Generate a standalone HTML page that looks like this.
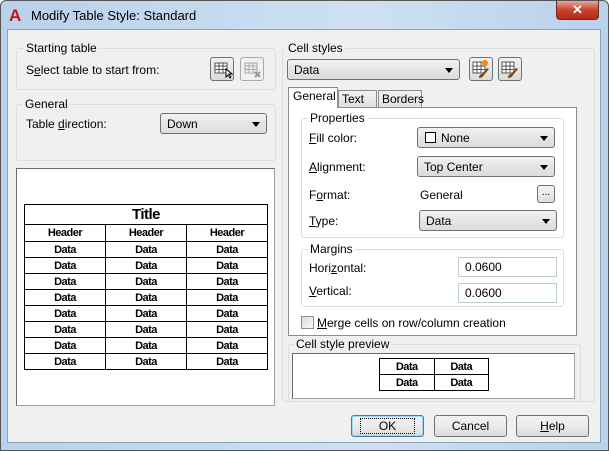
<!DOCTYPE html><html><head><style>
*{box-sizing:border-box}
body{margin:0;width:609px;height:451px;overflow:hidden;font-family:"Liberation Sans",sans-serif;font-size:12px;color:#000;background:#fff}
.win{position:absolute;left:0;top:0;width:609px;height:451px;background:linear-gradient(90deg,#b9d1ea,#cfe0f2 60%,#b9d1ea);border:1px solid #555;border-radius:6px 6px 0 0}
.client{position:absolute;left:7px;top:29px;width:594px;height:414px;background:#f0f0f0;border:1px solid #8da3bd}
.a{position:absolute}
.grp{position:absolute;border:1px solid #d5dfe5;border-radius:3px}
.lbl{position:absolute;background:#f0f0f0;padding:0 2px;line-height:14px}
.combo{position:absolute;height:21px;border:1px solid #707070;border-radius:3px;background:linear-gradient(#f2f2f2,#e5e5e5 50%,#dcdcdc);padding:3px 6px;line-height:14px}
.combo:after{content:"";position:absolute;right:6px;top:8px;border:4px solid transparent;border-top:5px solid #000;border-bottom:0}
.ib{position:absolute;width:24px;height:24px;border:1px solid #707070;border-radius:3px;background:linear-gradient(#f2f2f2,#dcdcdc)}
.txt{position:absolute;height:20px;border:1px solid #bcc;background:#fff;padding:2px 6px;line-height:14px}
.btn{position:absolute;height:22px;border:1px solid #707070;border-radius:3px;background:linear-gradient(#f2f2f2,#ebebeb 50%,#dcdcdc);text-align:center;line-height:20px}
table{border-collapse:collapse;font-weight:bold;font-size:11px;letter-spacing:-.5px}
td{border:1px solid #000;text-align:center;padding:0;height:16px;line-height:14px}
</style></head><body>
<div class="win">
<div class="a" style="left:8px;top:8px;width:16px;height:14px;color:#c3141a;font-weight:bold;font-size:17px;line-height:14px">A</div>
<div class="a" style="left:30px;top:7px;font-size:13px">Modify Table Style: Standard</div>
<div class="a" style="left:555px;top:0;width:43px;height:19px;background:linear-gradient(#e8a89a,#c7432d 50%,#b42a16);border:1px solid #6b2b22;border-top:0;border-radius:0 0 4px 4px;color:#fff;text-align:center;font-weight:bold;font-size:13px;line-height:18px">✕</div>
</div>
<div class="client"></div>
<div class="grp" style="left:16px;top:48px;width:260px;height:42px"></div>
<div class="lbl" style="left:24px;top:41px">Starting table</div>
<div class="a" style="left:26px;top:63px">S<u>e</u>lect table to start from:</div>
<div class="ib" style="left:210px;top:57px"><svg width="22" height="22"><rect x="4" y="5" width="12" height="10" fill="#fff" stroke="#555"/><path d="M4 8h12M4 11.5h12M8 5v10M12 5v10" stroke="#555"/><path d="M15 11l0 8 2-2 2 3 1-1-2-3 3 0z" fill="#fff" stroke="#000"/></svg></div>
<div class="ib" style="left:240px;top:57px;border-color:#aaa;background:#f0f0f0"><svg width="22" height="22"><rect x="4" y="5" width="12" height="10" fill="#eee" stroke="#aaa"/><path d="M4 8h12M4 11.5h12M8 5v10M12 5v10" stroke="#aaa"/><path d="M14 14l5 5M19 14l-5 5" stroke="#999" stroke-width="2"/></svg></div>
<div class="grp" style="left:16px;top:104px;width:260px;height:57px"></div>
<div class="lbl" style="left:23px;top:97px">General</div>
<div class="a" style="left:26px;top:117px">Table <u>d</u>irection:</div>
<div class="combo" style="left:160px;top:113px;width:107px">Down</div>
<div class="a" style="left:16px;top:168px;width:259px;height:238px;background:#fff;border:1px solid #a0a0a0;border-left-color:#696969;border-top-color:#696969"></div>
<table class="a" style="left:24px;top:204px;width:244px">
<tr><td colspan="3" style="font-size:15px;height:20px">Title</td></tr>
<tr><td style="height:17px">Header</td><td>Header</td><td>Header</td></tr>
<tr><td>Data</td><td>Data</td><td>Data</td></tr><tr><td>Data</td><td>Data</td><td>Data</td></tr><tr><td>Data</td><td>Data</td><td>Data</td></tr><tr><td>Data</td><td>Data</td><td>Data</td></tr><tr><td>Data</td><td>Data</td><td>Data</td></tr><tr><td>Data</td><td>Data</td><td>Data</td></tr><tr><td>Data</td><td>Data</td><td>Data</td></tr><tr><td>Data</td><td>Data</td><td>Data</td></tr>
</table>
<div class="grp" style="left:282px;top:48px;width:313px;height:354px"></div>
<div class="lbl" style="left:286px;top:41px">Cell styles</div>
<div class="combo" style="left:287px;top:59px;width:173px">Data</div>
<div class="ib" style="left:469px;top:57px"><svg width="22" height="22"><rect x="3" y="4" width="12" height="11" fill="#fff" stroke="#555"/><path d="M3 8h12M3 11.5h12M7 4v11M11 4v11" stroke="#555"/><circle cx="15" cy="5" r="3" fill="#f80"/><path d="M9 20c2 0 4-1 5-3l5-6-2-1-5 6c-2 0-3 2-3 4z" fill="#7a4a1a"/></svg></div>
<div class="ib" style="left:498px;top:57px"><svg width="22" height="22"><rect x="3" y="4" width="12" height="11" fill="#fff" stroke="#555"/><path d="M3 8h12M3 11.5h12M7 4v11M11 4v11" stroke="#555"/><path d="M9 20c2 0 4-1 5-3l5-6-2-1-5 6c-2 0-3 2-3 4z" fill="#7a4a1a"/></svg></div>
<div class="a" style="left:288px;top:107px;width:289px;height:229px;background:#fff;border:1px solid #898c95"></div>
<div class="a" style="left:338px;top:90px;width:39px;height:18px;border:1px solid #898c95;background:linear-gradient(#f2f2f2,#e0e0e0);padding:1px 3px">Text</div>
<div class="a" style="left:378px;top:90px;width:44px;height:18px;border:1px solid #898c95;background:linear-gradient(#f2f2f2,#e0e0e0);padding:1px 3px">Borders</div>
<div class="a" style="left:288px;top:87px;width:50px;height:21px;border:1px solid #898c95;border-bottom:0;background:#fff;padding:1px 4px">General</div>
<div class="grp" style="left:301px;top:118px;width:263px;height:120px"></div>
<div class="lbl" style="left:308px;top:111px;background:#fff">Properties</div>
<div class="a" style="left:309px;top:131px"><u>F</u>ill color:</div>
<div class="combo" style="left:417px;top:127px;width:138px;padding-left:7px"><span style="display:inline-block;width:11px;height:11px;border:1px solid #000;background:#fff;vertical-align:-1px;margin-right:5px"></span>None</div>
<div class="a" style="left:309px;top:160px"><u>A</u>lignment:</div>
<div class="combo" style="left:417px;top:156px;width:138px">Top Center</div>
<div class="a" style="left:309px;top:188px">F<u>o</u>rmat:</div>
<div class="a" style="left:420px;top:188px">General</div>
<div class="btn" style="left:537px;top:185px;width:18px;height:18px;line-height:14px;font-size:10px">...</div>
<div class="a" style="left:309px;top:214px"><u>T</u>ype:</div>
<div class="combo" style="left:419px;top:210px;width:138px">Data</div>
<div class="grp" style="left:301px;top:249px;width:263px;height:58px"></div>
<div class="lbl" style="left:308px;top:242px;background:#fff">Margins</div>
<div class="a" style="left:309px;top:261px">Hori<u>z</u>ontal:</div>
<div class="txt" style="left:458px;top:257px;width:99px">0.0600</div>
<div class="a" style="left:309px;top:284px"><u>V</u>ertical:</div>
<div class="txt" style="left:458px;top:283px;width:99px">0.0600</div>
<div class="a" style="left:301px;top:316px;width:13px;height:13px;border:1px solid #8f8f8f;background:linear-gradient(135deg,#ddd,#f8f8f8)"></div>
<div class="a" style="left:317px;top:316px"><u>M</u>erge cells on row/column creation</div>
<div class="grp" style="left:288px;top:344px;width:293px;height:58px"></div>
<div class="lbl" style="left:294px;top:337px">Cell style preview</div>
<div class="a" style="left:292px;top:353px;width:283px;height:46px;background:#fff;border:1px solid #a0a0a0;border-left-color:#696969;border-top-color:#696969"></div>
<table class="a" style="left:379px;top:358px;width:110px"><tr><td>Data</td><td>Data</td></tr><tr><td>Data</td><td>Data</td></tr></table>
<div class="btn" style="left:351px;top:415px;width:73px;border-color:#3c7fb1;box-shadow:inset 0 0 0 1px #9fd5f5"><span style="border:1px dotted #000;padding:0 18px">OK</span></div>
<div class="btn" style="left:434px;top:415px;width:73px">Cancel</div>
<div class="btn" style="left:516px;top:415px;width:73px"><u>H</u>elp</div>
</body></html>
